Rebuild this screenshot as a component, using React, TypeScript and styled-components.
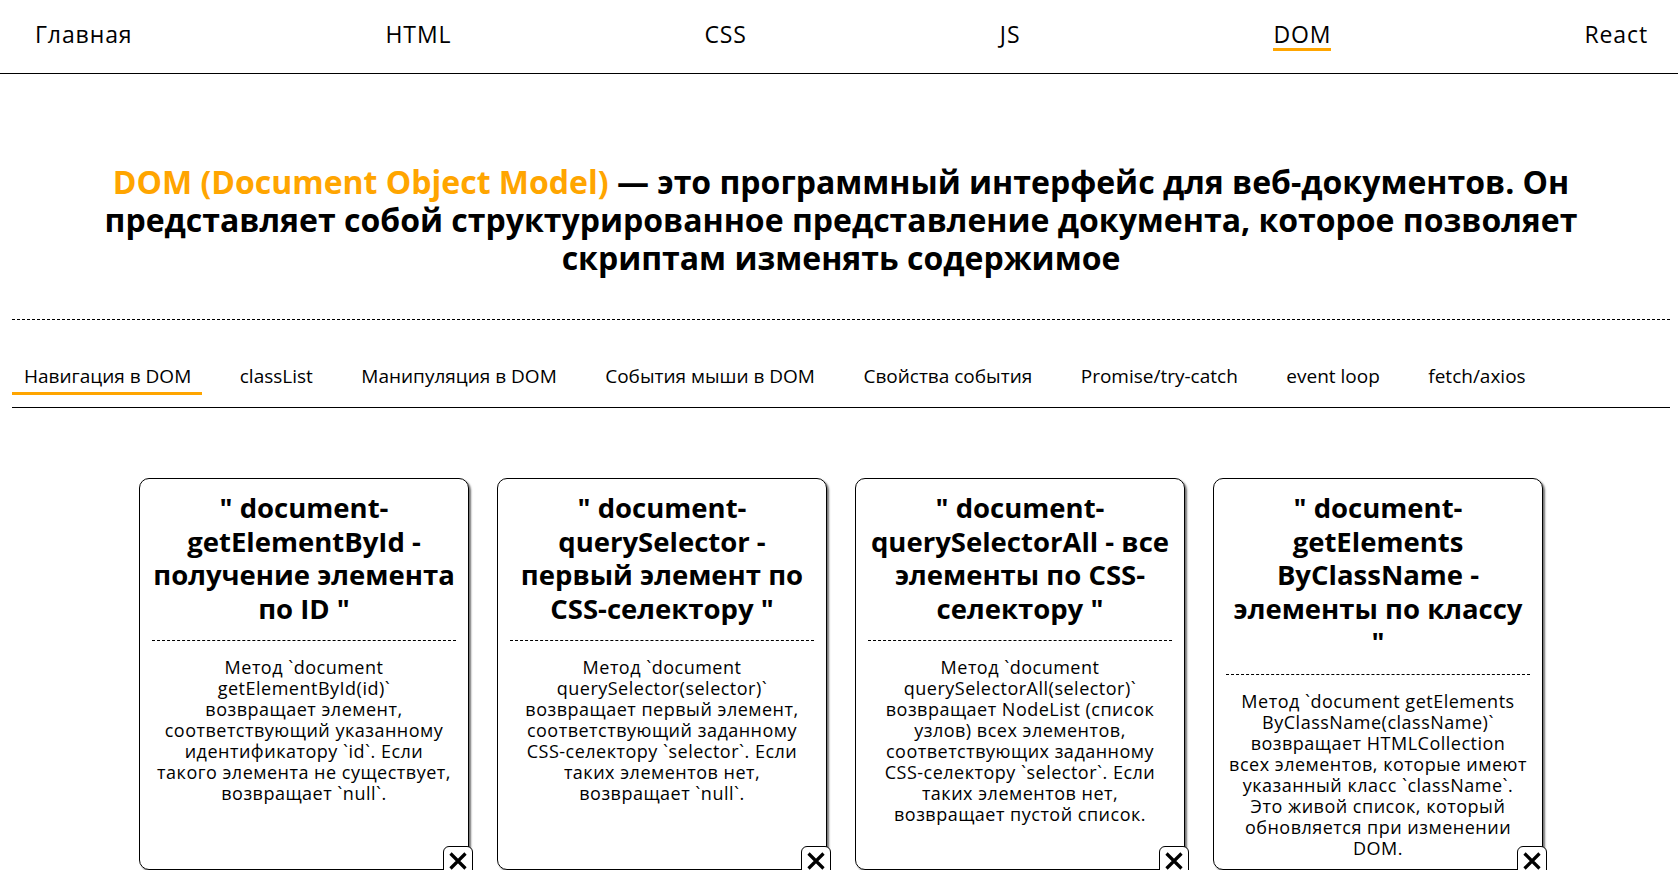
import React from "react";
import styled, { createGlobalStyle } from "styled-components";

const Global = createGlobalStyle`
  html, body { margin: 0; padding: 0; background: #fff; }
  body { font-family: "Open Sans", "Noto Sans", sans-serif; color: #000; }
  * { box-sizing: border-box; }
`;

const ORANGE = "#ffa500";

const TopNav = styled.nav`
  height: 74px;
  padding: 21px 30px 0 35px;
  display: flex;
  justify-content: space-between;
  align-items: flex-start;
  border-bottom: 1px solid #000;
`;

const NavLink = styled.a<{ $active?: boolean }>`
  font-size: 23px;
  line-height: 27px;
  letter-spacing: 0.9px;
  font-weight: 400;
  color: #000;
  text-decoration: none;
  border-bottom: 3px solid ${(p) => (p.$active ? ORANGE : "transparent")};
`;

const Main = styled.main`
  margin: 0 8px 0 12px;
`;

const LeadBlock = styled.header`
  margin-top: 89px;
  padding-bottom: 42px;
  border-bottom: 1px dashed #000;
`;

const Lead = styled.h1`
  margin: 0 auto;
  max-width: 1500px;
  font-size: 32px;
  line-height: 38px;
  font-weight: 700;
  text-align: center;
`;

const Accent = styled.span`
  color: ${ORANGE};
`;

const TabList = styled.div`
  margin-top: 45px;
  display: flex;
  gap: 25.5px;
  padding-bottom: 12px;
  border-bottom: 1px solid #000;
`;

const Tab = styled.button<{ $active?: boolean }>`
  font-family: inherit;
  background: none;
  border: none;
  padding: 0 11px 5px 12px;
  font-size: 19px;
  line-height: 22px;
  color: #000;
  cursor: pointer;
  border-bottom: 3px solid ${(p) => (p.$active ? ORANGE : "transparent")};
`;

const Cards = styled.section`
  margin-top: 70px;
  display: flex;
  justify-content: center;
  gap: 28px;
`;

const Card = styled.article`
  position: relative;
  width: 330px;
  height: 392px;
  border: 1px solid #000;
  border-radius: 10px;
  box-shadow: 2px 2px 2px rgba(0, 0, 0, 0.55);
  padding: 12px 12px 0;
  display: flex;
  flex-direction: column;
  text-align: center;
`;

const CardTitle = styled.h2`
  margin: 0;
  padding: 0 1px 15px;
  border-bottom: 1px dashed #000;
  font-size: 27.5px;
  line-height: 33.5px;
  font-weight: 700;
`;

const CardText = styled.p`
  margin: 16px 0 0;
  padding: 0 3px;
  font-size: 18px;
  line-height: 21px;
  letter-spacing: 0.5px;
  font-weight: 500;
  white-space: pre-line;
`;

const CloseButton = styled.button`
  position: absolute;
  right: -5px;
  bottom: -7px;
  width: 30px;
  height: 30px;
  padding: 0;
  display: flex;
  align-items: center;
  justify-content: center;
  background: #fff;
  border: 1px solid #000;
  border-radius: 6px;
  cursor: pointer;
`;

const navItems = ["Главная", "HTML", "CSS", "JS", "DOM", "React"];
const tabs = [
  "Навигация в DOM",
  "classList",
  "Манипуляция в DOM",
  "События мыши в DOM",
  "Свойства события",
  "Promise/try-catch",
  "event loop",
  "fetch/axios",
];

const cards = [
  {
    title: "\" document-getElementById - получение элемента по ID \"",
    text: "Метод `document getElementById(id)`\nвозвращает элемент, соответствующий указанному идентификатору `id`. Если такого элемента не существует, возвращает `null`.",
  },
  {
    title: "\" document-querySelector - первый элемент по CSS-селектору \"",
    text: "Метод `document querySelector(selector)` возвращает первый элемент, соответствующий заданному CSS-селектору `selector`. Если таких элементов нет, возвращает `null`.",
  },
  {
    title: "\" document-querySelectorAll - все элементы по CSS-селектору \"",
    text: "Метод `document querySelectorAll(selector)` возвращает NodeList (список узлов) всех элементов, соответствующих заданному CSS-селектору `selector`. Если таких элементов нет, возвращает пустой список.",
  },
  {
    title: "\" document-getElements ByClassName - элементы по классу \"",
    text: "Метод `document getElements ByClassName(className)` возвращает HTMLCollection всех элементов, которые имеют указанный класс `className`. Это живой список, который обновляется при изменении DOM.",
  },
];

const CloseIcon = () => (
  <svg width="24" height="24" viewBox="0 0 24 24" fill="none" stroke="#000" strokeWidth="3.2" strokeLinecap="butt">
    <path d="M4.5 4.5 L19.5 19.5 M19.5 4.5 L4.5 19.5" />
  </svg>
);

export default function App() {
  return (
    <>
      <Global />
      <TopNav>
        {navItems.map((n) => (
          <NavLink key={n} href="#" $active={n === "DOM"}>
            {n}
          </NavLink>
        ))}
      </TopNav>
      <Main>
        <LeadBlock>
          <Lead>
            <Accent>DOM (Document Object Model)</Accent> — это программный интерфейс для веб-документов. Он
            представляет собой структурированное представление документа, которое позволяет скриптам изменять
            содержимое
          </Lead>
        </LeadBlock>
        <TabList>
          {tabs.map((t, i) => (
            <Tab key={t} $active={i === 0}>
              {t}
            </Tab>
          ))}
        </TabList>
        <Cards>
          {cards.map((c) => (
            <Card key={c.title}>
              <CardTitle>{c.title}</CardTitle>
              <CardText>{c.text}</CardText>
              <CloseButton aria-label="Закрыть">
                <CloseIcon />
              </CloseButton>
            </Card>
          ))}
        </Cards>
      </Main>
    </>
  );
}
